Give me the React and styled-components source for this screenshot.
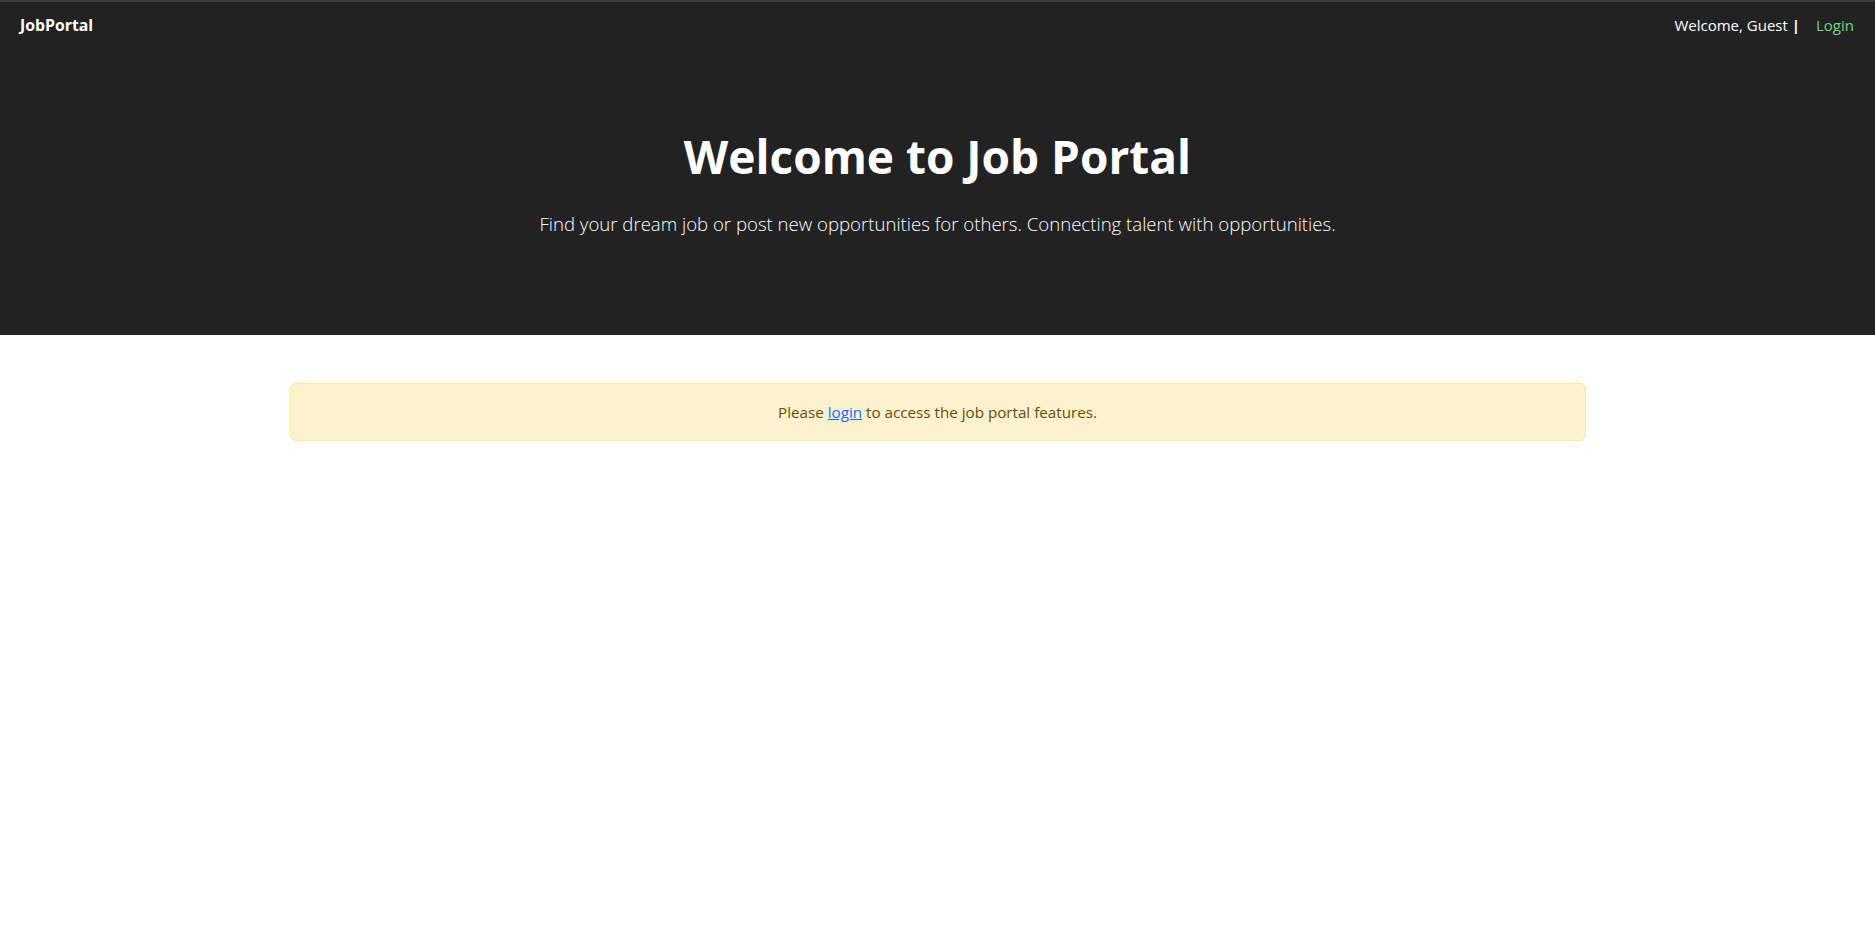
import React from 'react';
import styled, { createGlobalStyle } from 'styled-components';

const GlobalStyle = createGlobalStyle`
    body {
        margin: 0;
        background: #fff;
        font-family: "Open Sans", "Noto Sans", "Liberation Sans", sans-serif;
    }
`;

const Navbar = styled.nav`
    display: flex;
    align-items: center;
    justify-content: space-between;
    height: 45px;
    padding: 0 21px 0 20px;
    background: #222222;
    border-top: 2px solid #3a3a3d;
`;

Navbar.Brand = styled.a`
    color: #fff;
    font-size: 15.8px;
    font-weight: 700;
    text-decoration: none;
`;

Navbar.Right = styled.div`
    display: flex;
    align-items: center;
    gap: 16px;
    font-size: 15px;
`;

const Greeting = styled.span`
    color: #fff;

    strong {
        font-weight: 700;
    }
`;

const NavLink = styled.a`
    color: #74d47a;
    text-decoration: none;
`;

const Hero = styled.header`
    background: #222222;
    color: #fff;
    text-align: center;
    padding: 80px 16px 80px;
`;

Hero.Title = styled.h1`
    margin: 0 0 24px;
    font-size: 46px;
    line-height: 58px;
    font-weight: 700;
`;

Hero.Lead = styled.p`
    margin: 0 0 16px;
    font-size: 18.6px;
    line-height: 30px;
    font-weight: 300;
    color: #fff;
`;

const Container = styled.main`
    max-width: 1296px;
    margin: 48px auto 0;
    padding: 0 12px;
`;

const Alert = styled.div`
    padding: 16px;
    border: 1px solid #ffe69c;
    border-radius: 6px;
    background: #fdf2cf;
    color: #664d03;
    text-align: center;
    font-size: 15.2px;
    line-height: 24px;

    a {
        color: #0d6efd;
    }
`;

function App() {
    return (
        <>
            <GlobalStyle />
            <Navbar>
                <Navbar.Brand href="#">JobPortal</Navbar.Brand>
                <Navbar.Right>
                    <Greeting>Welcome, Guest <strong>|</strong></Greeting>
                    <NavLink href="#">Login</NavLink>
                </Navbar.Right>
            </Navbar>
            <Hero>
                <Hero.Title>Welcome to Job Portal</Hero.Title>
                <Hero.Lead>Find your dream job or post new opportunities for others. Connecting talent with opportunities.</Hero.Lead>
            </Hero>
            <Container>
                <Alert>
                    Please <a href="#">login</a> to access the job portal features.
                </Alert>
            </Container>
        </>
    );
}

export default App;
